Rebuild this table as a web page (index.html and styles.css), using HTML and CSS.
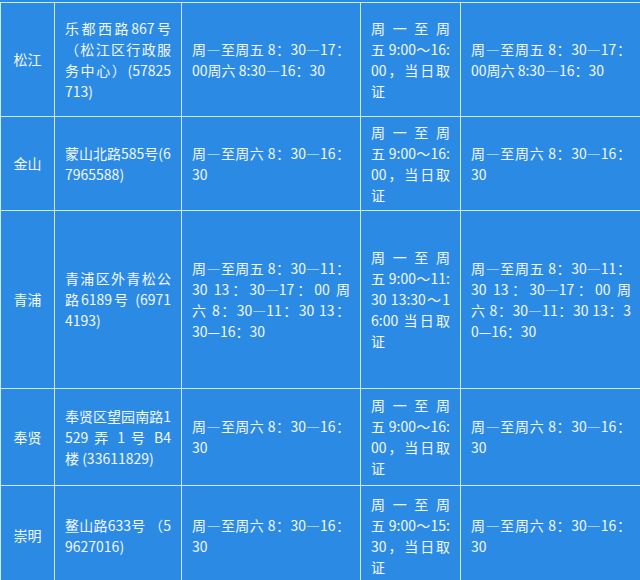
FILE: index.html
```html
<!DOCTYPE html>
<html lang="zh-CN">
<head>
<meta charset="utf-8">
<title>办证点</title>
<link rel="stylesheet" href="styles.css">
</head>
<body>
<div class="grid">
  <div class="c name r1">松江</div>
  <div class="c r1"><div class="t"><span class="j">乐都西路867号</span><span class="j">（松江区行政服</span><span class="j">务中心）(57825</span><span>713)</span></div></div>
  <div class="c r1"><div class="t"><span class="j">周—至周五 8：30—17：</span><span>00周六 8:30—16：30</span></div></div>
  <div class="c r1"><div class="t"><span class="j">周一至周</span><span class="j">五 9:00～16:</span><span class="j">00，当日取</span><span>证</span></div></div>
  <div class="c r1"><div class="t"><span class="j">周—至周五 8：30—17：</span><span>00周六 8:30—16：30</span></div></div>

  <div class="c name r2">金山</div>
  <div class="c r2"><div class="t"><span>蒙山北路585号(6</span><span>7965588)</span></div></div>
  <div class="c r2"><div class="t"><span class="j">周—至周六 8：30—16：</span><span>30</span></div></div>
  <div class="c r2"><div class="t"><span class="j">周一至周</span><span class="j">五 9:00～16:</span><span class="j">00，当日取</span><span>证</span></div></div>
  <div class="c r2"><div class="t"><span class="j">周—至周六 8：30—16：</span><span>30</span></div></div>

  <div class="c name r3">青浦</div>
  <div class="c r3"><div class="t"><span class="j">青浦区外青松公</span><span class="j">路6189号 (6971</span><span>4193)</span></div></div>
  <div class="c r3"><div class="t"><span class="j">周—至周五 8：30—11：</span><span class="j">30 13：30—17：00 周</span><span class="j">六 8：30—11：30 13：</span><span>30—16：30</span></div></div>
  <div class="c r3"><div class="t"><span class="j">周一至周</span><span class="j">五 9:00～11:</span><span class="j">30 13:30～1</span><span class="j">6:00 当日取</span><span>证</span></div></div>
  <div class="c r3"><div class="t"><span class="j">周—至周五 8：30—11：</span><span class="j">30 13：30—17：00 周</span><span class="j">六 8：30—11：30 13：3</span><span>0—16：30</span></div></div>

  <div class="c name r4">奉贤</div>
  <div class="c r4"><div class="t"><span class="j">奉贤区望园南路1</span><span class="j">529 弄 1 号 B4</span><span>楼 (33611829)</span></div></div>
  <div class="c r4"><div class="t"><span class="j">周—至周六 8：30—16：</span><span>30</span></div></div>
  <div class="c r4"><div class="t"><span class="j">周一至周</span><span class="j">五 9:00～16:</span><span class="j">00，当日取</span><span>证</span></div></div>
  <div class="c r4"><div class="t"><span class="j">周—至周六 8：30—16：</span><span>30</span></div></div>

  <div class="c name r5">崇明</div>
  <div class="c r5"><div class="t"><span class="j">鳌山路633号 （5</span><span>9627016)</span></div></div>
  <div class="c r5"><div class="t"><span class="j">周—至周六 8：30—16：</span><span>30</span></div></div>
  <div class="c r5"><div class="t"><span class="j">周一至周</span><span class="j">五 9:00～15:</span><span class="j">30，当日取</span><span>证</span></div></div>
  <div class="c r5"><div class="t"><span class="j">周—至周六 8：30—16：</span><span>30</span></div></div>
</div>
</body>
</html>
```
FILE: styles.css
```css
html, body {
  margin: 0;
  padding: 0;
  background: #2b8be4;
}
body {
  width: 640px;
  height: 580px;
  overflow: hidden;
  font-family: "Noto Sans CJK SC", "Open Sans", sans-serif;
  font-size: 14px;
  line-height: 21px;
  color: #f2f8fe;
}
.grid {
  margin-top: 2px;
  padding: 1px 0 1px 1px;
  width: 640px;
  box-sizing: border-box;
  display: grid;
  grid-template-columns: 53px 126px 178px 99px 180px;
  grid-template-rows: 113px 93px 177px 96px 99px;
  gap: 1px;
  background: #cfe7fa;
}
.c {
  background: #2b8be4;
  display: flex;
  align-items: center;
  padding: 0 10px;
  min-width: 0;
}
.name {
  justify-content: center;
  padding: 0;
}
.t {
  width: 100%;
}
.t span {
  display: block;
}
.t .j {
  text-align: justify;
  text-align-last: justify;
}
```
